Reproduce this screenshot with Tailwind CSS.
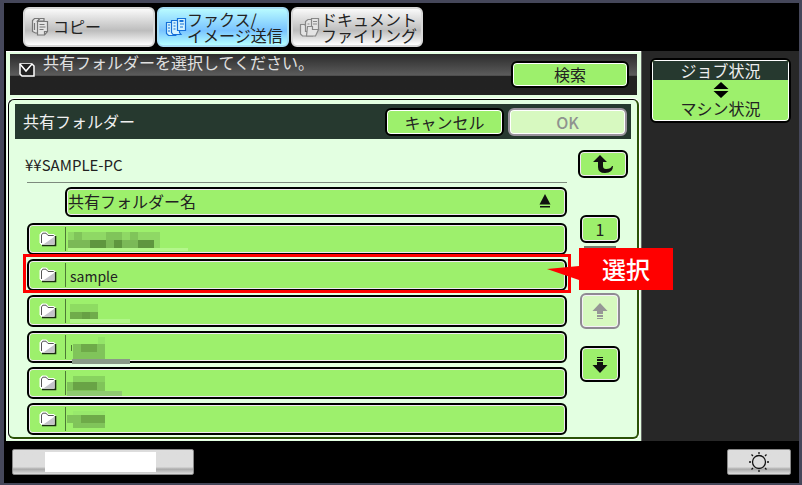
<!DOCTYPE html>
<html lang="ja">
<head>
    <meta charset="UTF-8">
    <meta name="viewport" content="width=device-width, initial-scale=1.0">
    <title>共有フォルダー</title>
    <script src="https://cdn.jsdelivr.net/npm/@tailwindcss/browser@4"></script>
</head>
<body class="flex min-h-screen flex-col border-t-3 border-r-3 border-b-2 border-l-4 border-[#45475a] bg-black font-['Noto_Sans_CJK_JP',sans-serif] text-base leading-4 text-[#222]">

    <!-- Shared icons -->
    <svg class="hidden">
        <symbol id="folder" viewBox="0 0 18 16">
            <path d="M1 3.500L3 1h4.500l2 2.500H15l1 1v9.500H3l-2-2z" fill="#fff" stroke="#fff"/>
            <path d="M3 14.500h13.500V5" fill="none" stroke="#1a2a12" stroke-width="1.600"/>
            <path d="M2.500 12V4l1.300-1.800H7l2 2.300h5.500l.5.500" fill="none" stroke="#555"/>
            <path d="M5 13L15 6v7z" fill="#c4c4ca"/>
        </symbol>
    </svg>

    <!-- Mode tabs -->
    <nav class="flex gap-0.5 pt-1 pb-1 pl-[19px]">
        <button class="flex h-10 w-[132px] items-center gap-1 rounded-md border-2 border-[#d8d8d8] bg-linear-to-b from-[#fafafa] via-[#bdbdbd] via-60% to-white pl-1.5 text-left">
            <svg class="h-5 w-[18px] shrink-0" viewBox="0 0 18 20"><g fill="#e4e4e4" stroke="#777" stroke-width="1.200"><path d="M8 1.500H3.500L1.500 3.500v11l3 1.500H8z"/><path d="M6.500 4L9 1.500h4V4z"/><path d="M6.500 4.500h10v10l-3 3.500h-7z"/><path d="M13.500 18v-3.500h3M8.500 7.500h5M8.500 10h6M8.500 12.500h4M3.500 6v7" fill="none"/></g></svg>
            <span class="pb-0.5">コピー</span>
        </button>
        <button class="flex h-10 w-[132px] items-center rounded-md border-2 border-[#a5ddf5] bg-linear-to-b from-[#b8faff] via-[#79c3ff] via-60% to-[#b5ffff] pl-1.5 text-left whitespace-nowrap">
            <svg class="h-5 w-[22px] shrink-0" viewBox="0 0 22 20"><g fill="#d5f3ff" stroke="#1570d8" stroke-width="1.200"><path d="M1.500 5.500h7v11l2 2h-7l-2-2z"/><path d="M6.500 3.500h8v12l1.500 2H8l-1.500-2z"/><path d="M12.500 1.500h8v12h-8z"/><path d="M3 8h2M3 11h2M3 14h2M8.500 6h2M8.500 9h2M8.500 12h2M15 7h4M15 10h3" fill="none"/><path d="M14.500 4h4" stroke-width="2"/></g></svg>
            <span class="flex flex-col">
                <span>ファクス/</span>
                <span>イメージ送信</span>
            </span>
        </button>
        <button class="flex h-10 w-[132px] items-center rounded-md border-2 border-[#d8d8d8] bg-linear-to-b from-[#fafafa] via-[#bdbdbd] via-60% to-white pl-1.5 text-left whitespace-nowrap">
            <svg class="h-5 w-[22px] shrink-0" viewBox="0 0 22 20"><g fill="#e4e4e4" stroke="#888" stroke-width="1.200"><path d="M1.500 7.500h4l2 2h6v9.500h-10l-2-2z"/><path d="M6.500 4.500L9 2.500h4v12H6.500z"/><path d="M12.500 1.500h7v11h-7z"/><path d="M14 4.500h4M14 7h4M8.500 7h2"/><path d="M8.500 9.500h5v3h6l-3 6.500h-9z"/></g></svg>
            <span class="flex flex-col">
                <span>ドキュメント</span>
                <span>ファイリング</span>
            </span>
        </button>
    </nav>

    <div class="flex flex-1">
        <main class="ml-0.5 flex flex-1 flex-col border-t border-white bg-[#e3ffe1] px-0.5 pt-0.5 pb-0.5">

            <!-- Message bar -->
            <div class="mx-0.5 flex h-[41px] items-start bg-linear-to-b from-[#2c2c2c] from-0% via-[#5c5c5c] via-52% to-[#222] to-54% pr-2 pl-2">
                <svg class="mt-2 h-4 w-[18px]" viewBox="0 0 18 16"><path d="M2 2h12l2 2v10H4l-2-2z" fill="#222" stroke="#fff" stroke-width="1.500"/><path d="M2 2l6 7 6-7" fill="#222" stroke="#fff" stroke-width="1.500"/></svg>
                <p class="ml-[7px] flex-1 text-[#e0e0e0]">共有フォルダーを選択してください。</p>
                <button class="mt-[7px] h-[27px] w-[118px] rounded-md border-2 border-black bg-[#9df06c] pb-0.5 shadow-[inset_0_0_0_1px_#fff]">検索</button>
            </div>

            <!-- Folder panel -->
            <section class="mt-1 flex-1 rounded-md border-t border-r-2 border-b-2 border-l border-t-black border-r-[#2c5208] border-b-[#2c5208] border-l-black pt-1 shadow-[0_0_0_1px_#fff]">
                <header class="mx-1.5 flex h-[35px] items-center gap-1 bg-[#26392f] pr-1 pl-2">
                    <h1 class="flex-1 pb-0.5 text-[#f0f0f0]">共有フォルダー</h1>
                    <button class="h-7 w-[119px] rounded-md border-2 border-black bg-[#9df06c] shadow-[inset_0_0_0_1px_#fff]">キャンセル</button>
                    <button disabled class="h-7 w-[119px] rounded-md border-2 border-[#9a939d] bg-[#d7f9c0] font-medium text-[#8f938f] shadow-[inset_0_0_0_1px_#fff]">OK</button>
                </header>

                <div class="flex gap-[11px] pr-[9px] pl-[18px]">
                    <div class="flex-1">
                        <p class="-ml-0.5 flex h-[43px] items-center pt-2 text-[15px]">¥¥SAMPLE-PC</p>
                        <hr class="border-[#7d8a7d]">
                        <button class="mt-1 ml-[38px] flex h-[30px] w-[calc(100%-38px)] items-center justify-between rounded-md border-2 border-black bg-[#9df06c] pr-3.5 pb-0.5 pl-px shadow-[inset_0_0_0_1px_#f3e8f5]">
                            共有フォルダー名
                            <svg class="h-4 w-3" viewBox="0 0 12 16"><path d="M6 1l5.500 10.500H.5zM1 13h10v1.500H1z" fill="#111"/></svg>
                        </button>

                        <ul class="mt-1.5 flex flex-col gap-1">
                            <li>
                                <button aria-label="フォルダー 1" class="flex h-8 w-full items-center rounded-md border-2 border-black bg-[#9df06c] pl-2.5 shadow-[inset_0_0_0_1px_#f3e8f5]">
                                    <svg class="h-4 w-[18px]"><use href="#folder"/></svg>
                                    <span class="ml-2 h-6 w-px bg-[#4d7a35]"></span>
                                    <svg class="ml-0.5 h-6 w-[120px]" viewBox="0 0 120 24"><path d="M0 5h92v16H0z" fill="#8fd865"/><path d="M6 5h8v8H6zM38 5h16v8H38zM62 5h8v8h-8z" fill="#80c45a"/><path d="M0 13h86v8H0z" fill="#7bb957"/><path d="M22 13h16v8H22zM46 13h8v8h-8zM70 13h16v8H70z" fill="#5f963f"/><path d="M0 21h120v3H0z" fill="#b4f78b"/></svg>
                                </button>
                            </li>
                            <li class="relative">
                                <button class="flex h-8 w-full items-center rounded-md border-2 border-black bg-[#9df06c] pl-2.5 shadow-[inset_0_0_0_1px_#f3e8f5]">
                                    <svg class="h-4 w-[18px]"><use href="#folder"/></svg>
                                    <span class="ml-2 h-6 w-px bg-[#4d7a35]"></span>
                                    <span class="ml-1 pt-0.5 text-sm">sample</span>
                                </button>
                                <!-- Highlight and callout -->
                                <div class="pointer-events-none absolute -top-[5px] -right-1 -bottom-0.5 -left-1 border-3 border-[#f00]"></div>
                                <div class="absolute -top-[11px] left-[calc(100%-20px)] z-10 flex">
                                    <svg class="h-[42px] w-8" viewBox="0 0 32 42"><path d="M0 21l32-3v14z" fill="#f00"/></svg>
                                    <div class="flex h-[42px] w-[94px] items-center justify-center bg-[#f00] text-2xl font-medium text-white">選択</div>
                                </div>
                            </li>
                            <li>
                                <button aria-label="フォルダー 3" class="flex h-8 w-full items-center rounded-md border-2 border-black bg-[#9df06c] pl-2.5 shadow-[inset_0_0_0_1px_#f3e8f5]">
                                    <svg class="h-4 w-[18px]"><use href="#folder"/></svg>
                                    <span class="ml-2 h-6 w-px bg-[#4d7a35]"></span>
                                    <svg class="ml-1 h-6 w-[60px]" viewBox="0 0 60 24"><path d="M0 5h28v8H0z" fill="#8edb62"/><path d="M0 13h28v7H0z" fill="#70ac4b"/><path d="M12 13h8v7h-8z" fill="#67a044"/><path d="M0 20h60v4H0z" fill="#b0f788"/></svg>
                                </button>
                            </li>
                            <li>
                                <button aria-label="フォルダー 4" class="flex h-8 w-full items-center rounded-md border-2 border-black bg-[#9df06c] pl-2.5 shadow-[inset_0_0_0_1px_#f3e8f5]">
                                    <svg class="h-4 w-[18px]"><use href="#folder"/></svg>
                                    <span class="ml-2 h-6 w-px bg-[#4d7a35]"></span>
                                    <svg class="ml-1 h-6 w-[60px] overflow-visible" viewBox="0 0 60 24"><path d="M28 2h7v7h-7z" fill="#94e569"/><path d="M3 9h32v15H3z" fill="#80c45a"/><path d="M11 9h16v8H11z" fill="#6eaa49"/><path d="M1 10h1v6H1z" fill="#4d7a35"/><path d="M2 24h58v5H2z" fill="#8a9a88"/></svg>
                                </button>
                            </li>
                            <li>
                                <button aria-label="フォルダー 5" class="flex h-8 w-full items-center rounded-md border-2 border-black bg-[#9df06c] pl-2.5 shadow-[inset_0_0_0_1px_#f3e8f5]">
                                    <svg class="h-4 w-[18px]"><use href="#folder"/></svg>
                                    <span class="ml-2 h-6 w-px bg-[#4d7a35]"></span>
                                    <svg class="ml-px h-6 w-[56px] overflow-visible" viewBox="0 0 56 24"><path d="M6 5h32v6H6z" fill="#88d35f"/><path d="M0 11h38v9H0z" fill="#80c45a"/><path d="M6 11h24v8H6z" fill="#69a346"/><path d="M0 20h55v5H0z" fill="#8fcb70"/></svg>
                                </button>
                            </li>
                            <li>
                                <button aria-label="フォルダー 6" class="flex h-8 w-full items-center rounded-md border-2 border-black bg-[#9df06c] pl-2.5 shadow-[inset_0_0_0_1px_#f3e8f5]">
                                    <svg class="h-4 w-[18px]"><use href="#folder"/></svg>
                                    <span class="ml-2 h-6 w-px bg-[#4d7a35]"></span>
                                    <svg class="ml-px h-6 w-[56px]" viewBox="0 0 56 24"><path d="M6 4h32v4H6z" fill="#98e96c"/><path d="M0 8h38v8H0zM6 16h32v5H6z" fill="#80c45a"/><path d="M14 8h24v8H14z" fill="#6eaa49"/></svg>
                                </button>
                            </li>
                        </ul>
                    </div>

                    <!-- Paging -->
                    <div class="flex w-[50px] flex-col pt-[11px]">
                        <button aria-label="上の階層へ" class="flex h-7 items-center justify-center rounded-md border-2 border-black bg-[#9df06c] shadow-[inset_0_0_0_1px_#f3e8f5]">
                            <svg class="h-5 w-[22px]" viewBox="0 0 22 20"><path d="M8 1l7 7h-4v4q0 3 3 3 5 0 6-3h1q0 7-8 7-7 0-7-6V8H1z" fill="#111"/></svg>
                        </button>
                        <span class="mt-[37px] ml-0.5 flex h-7 w-10 items-center justify-center rounded-md border-2 border-black bg-[#9df06c] shadow-[inset_0_0_0_1px_#f3e8f5]">1</span>
                        <span class="mt-[3px] ml-1.5 h-0.5 w-8 bg-[#6f7f6f]"></span>
                        <button disabled aria-label="前のページ" class="mt-[45px] ml-0.5 flex h-9 w-10 items-center justify-center rounded-md border-2 border-[#8f8a93] bg-[#d7f9c0] shadow-[inset_0_0_0_1px_#f6f0f8]">
                            <svg class="h-[17px] w-4" viewBox="0 0 16 17"><path d="M8 0l7.500 8H11v3H5V8H.5zM5 12h6v2H5zM5 15h6v1H5z" fill="#969696"/></svg>
                        </button>
                        <button aria-label="次のページ" class="mt-[17px] ml-0.5 flex h-9 w-10 items-center justify-center rounded-md border-2 border-black bg-[#9df06c] shadow-[inset_0_0_0_1px_#f3e8f5]">
                            <svg class="h-[17px] w-4" viewBox="0 0 16 17"><path d="M8 17L.5 9H5V6h6v3h4.500zM5 3h6v2H5zM5 1h6v1H5z" fill="#111"/></svg>
                        </button>
                    </div>
                </div>
            </section>
        </main>

        <!-- Status sidebar -->
        <aside class="w-[158px] border-l border-[#666] bg-[#272727] px-2 pt-[7px]">
            <button class="flex w-full flex-col rounded-md border-2 border-black bg-[#9df06c] p-px text-center shadow-[inset_0_0_0_1px_#fff]">
                <span class="w-full bg-[#26392f] pt-px pb-0.5 text-[#eee]">ジョブ状況</span>
                <svg class="mx-auto mt-0.5 h-4 w-4" viewBox="0 0 16 16"><path d="M8 0l7.500 7H.5zM8 16L.5 9h15z" fill="#000"/></svg>
                <span class="w-full pt-0.5 pb-1">マシン状況</span>
            </button>
        </aside>
    </div>

    <footer class="flex h-[42px] items-start justify-between pt-2 pr-2 pl-2">
        <button aria-label="メニュー" class="flex h-[26px] w-[182px] rounded-xs border border-[#888] bg-linear-to-b from-[#ddd] from-70% via-[#aaa] via-80% to-[#ddd] py-0.5 pl-8">
            <span class="h-full w-[111px] bg-white"></span>
        </button>
        <button aria-label="明るさ" class="flex h-[26px] w-16 items-center justify-center rounded-xs border border-[#888] bg-linear-to-b from-[#ddd] from-70% via-[#aaa] via-80% to-[#ddd]">
            <svg class="h-[22px] w-[22px]" viewBox="0 0 22 22"><g fill="none" stroke="#111" stroke-width="1.300"><circle cx="11" cy="11" r="6.500"/><path d="M11 1v2M11 19v2M1 11h2M19 11h2M3.500 3.500L5 5M17 17l1.500 1.500M3.500 18.500L5 17M17 5l1.500-1.500"/></g></svg>
        </button>
    </footer>
</body>
</html>
